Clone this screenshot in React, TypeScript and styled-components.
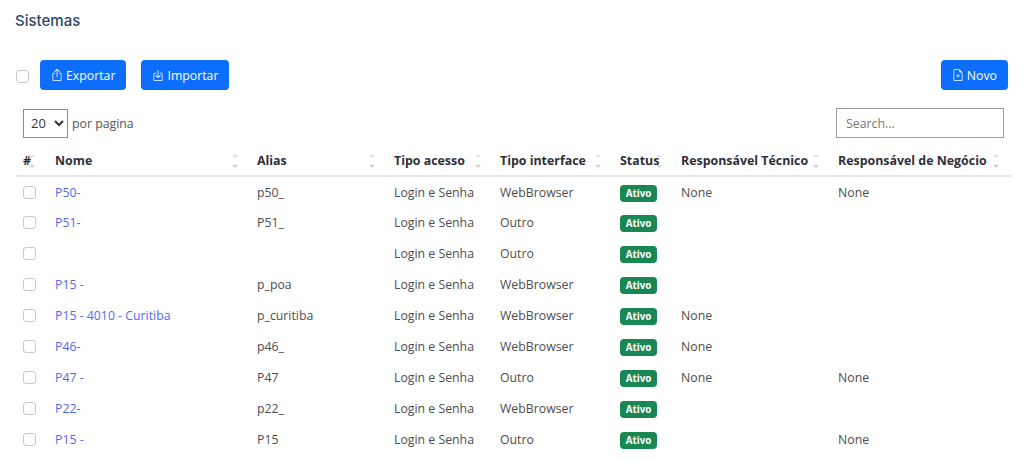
import React from 'react';
import styled, { createGlobalStyle } from 'styled-components';
import { BsBoxArrowUp, BsBoxArrowInDown, BsFileEarmarkPlus } from 'react-icons/bs';

const GlobalStyle = createGlobalStyle`
  html, body {
    margin: 0;
    background: #fff;
    font-family: "Open Sans", "Liberation Sans", sans-serif;
    color: #444;
  }
`;

const columns = [
  { title: '#', width: 32, right: 13 },
  { title: 'Nome', width: 202, right: 12 },
  { title: 'Alias', width: 137, right: 12 },
  { title: 'Tipo acesso', width: 106, right: 12 },
  { title: 'Tipo interface', width: 120, right: 12 },
  { title: 'Status', width: 61, right: 12 },
  { title: 'Responsável Técnico', width: 157, right: 12 },
  { title: 'Responsável de Negócio', width: 180, right: 12 },
];

const rows = [
  { nome: 'P50-', alias: 'p50_', acesso: 'Login e Senha', iface: 'WebBrowser', tecnico: 'None', negocio: 'None' },
  { nome: 'P51-', alias: 'P51_', acesso: 'Login e Senha', iface: 'Outro', tecnico: '', negocio: '' },
  { nome: '', alias: '', acesso: 'Login e Senha', iface: 'Outro', tecnico: '', negocio: '' },
  { nome: 'P15 -', alias: 'p_poa', acesso: 'Login e Senha', iface: 'WebBrowser', tecnico: '', negocio: '' },
  { nome: 'P15 - 4010 - Curitiba', alias: 'p_curitiba', acesso: 'Login e Senha', iface: 'WebBrowser', tecnico: 'None', negocio: '' },
  { nome: 'P46-', alias: 'p46_', acesso: 'Login e Senha', iface: 'WebBrowser', tecnico: 'None', negocio: '' },
  { nome: 'P47 -', alias: 'P47', acesso: 'Login e Senha', iface: 'Outro', tecnico: 'None', negocio: 'None' },
  { nome: 'P22-', alias: 'p22_', acesso: 'Login e Senha', iface: 'WebBrowser', tecnico: '', negocio: '' },
  { nome: 'P15 -', alias: 'P15', acesso: 'Login e Senha', iface: 'Outro', tecnico: '', negocio: 'None' },
];

const Page = styled.div`
  width: 1024px;
  height: 460px;
  overflow: hidden;
  padding: 12px 13px 0 16px;
  box-sizing: border-box;
`;

const Title = styled.h1`
  margin: 0 0 30px -1px;
  font-family: Inter, "Open Sans", sans-serif;
  font-size: 15px;
  line-height: 18px;
  font-weight: 500;
  color: #2b4668;
`;

const Toolbar = styled.div`
  display: flex;
  align-items: center;
  height: 30px;
`;

const Check = styled.span`
  display: block;
  width: 13px;
  height: 13px;
  box-sizing: border-box;
  border: 1px solid #c6c8cc;
  border-radius: 3px;
  background: #fff;
`;

const HeadCheck = styled(Check)`
  margin: 2px 11px 0 0;
`;

const Button = styled.button<{ $gap?: number; $push?: boolean }>`
  display: flex;
  align-items: center;
  justify-content: center;
  gap: 3px;
  height: 30px;
  padding: 0 11px;
  margin-left: ${(p) => (p.$push ? 'auto' : '0')};
  margin-right: ${(p) => p.$gap ?? 0}px;
  border: 0;
  border-radius: 4px;
  background: #0d6efd;
  color: #fff;
  font-family: "Open Sans", sans-serif;
  font-size: 12.3px;
`;

const Controls = styled.div`
  display: flex;
  align-items: center;
  justify-content: space-between;
  margin: 18px 7px 0 7px;
  height: 30px;
`;

const PerPage = styled.label`
  display: flex;
  align-items: center;
  gap: 4px;
  font-size: 12.3px;
  color: #555;
`;

const Select = styled.select`
  width: 45px;
  height: 29px;
  padding-left: 3px;
  border: 1px solid #8c8c8c;
  border-radius: 0;
  background: #fff;
  font-family: "Open Sans", sans-serif;
  font-size: 13px;
  color: #333;
`;

const SearchBox = styled.input`
  width: 168px;
  height: 30px;
  box-sizing: border-box;
  padding: 0 9px;
  border: 1px solid #9a9a9a;
  font-family: "Open Sans", sans-serif;
  font-size: 12.3px;
  outline: none;
  &::placeholder {
    color: #777;
  }
`;

const Table = styled.table`
  width: 995px;
  margin-top: 7px;
  table-layout: fixed;
  border-collapse: collapse;
`;

const HeadCell = styled.th`
  position: relative;
  height: 31px;
  padding: 0 0 0 7px;
  box-sizing: border-box;
  border-bottom: 2px solid #e6e6e6;
  text-align: left;
  font-size: 12.4px;
  font-weight: 700;
  color: #2f2f3a;
  white-space: nowrap;
`;

const Sort = styled.span<{ $right: number }>`
  position: absolute;
  top: 9px;
  right: ${(p) => p.$right}px;
  display: flex;
  flex-direction: column;
  gap: 8px;
  &::before,
  &::after {
    content: '';
    border-left: 3px solid transparent;
    border-right: 3px solid transparent;
  }
  &::before {
    border-bottom: 3px solid #e2e2e2;
  }
  &::after {
    border-top: 3px solid #cfcfcf;
  }
`;

const Cell = styled.td`
  height: 30.9px;
  padding: 1px 0 0 7px;
  box-sizing: border-box;
  font-size: 12.3px;
  color: #4d4d4d;
  white-space: nowrap;
`;

const NameLink = styled.a`
  color: #5468ee;
  text-decoration: none;
`;

const Badge = styled.span`
  display: inline-block;
  width: 37px;
  height: 17px;
  margin-top: 2px;
  border-radius: 4px;
  background: #198754;
  color: #fff;
  font-size: 9.8px;
  font-weight: 700;
  line-height: 17px;
  text-align: center;
  vertical-align: middle;
`;

export default function App() {
  return (
    <Page>
      <GlobalStyle />
      <Title>Sistemas</Title>
      <Toolbar>
        <HeadCheck />
        <Button $gap={15}><BsBoxArrowUp size={12} />Exportar</Button>
        <Button><BsBoxArrowInDown size={12} />Importar</Button>
        <Button $push $gap={3}><BsFileEarmarkPlus size={12} />Novo</Button>
      </Toolbar>
      <Controls>
        <PerPage>
          <Select defaultValue="20">
            <option>10</option>
            <option>20</option>
            <option>50</option>
          </Select>
          por pagina
        </PerPage>
        <SearchBox placeholder="Search..." />
      </Controls>
      <Table>
        <colgroup>
          {columns.map((c) => <col key={c.title} width={c.width} />)}
        </colgroup>
        <thead>
          <tr>
            {columns.map((c) => (
              <HeadCell key={c.title}>
                {c.title}
                <Sort $right={c.right} />
              </HeadCell>
            ))}
          </tr>
        </thead>
        <tbody>
          {rows.map((r, i) => (
            <tr key={i}>
              <Cell><Check /></Cell>
              <Cell><NameLink href="#">{r.nome}</NameLink></Cell>
              <Cell>{r.alias}</Cell>
              <Cell>{r.acesso}</Cell>
              <Cell>{r.iface}</Cell>
              <Cell><Badge>Ativo</Badge></Cell>
              <Cell>{r.tecnico}</Cell>
              <Cell>{r.negocio}</Cell>
            </tr>
          ))}
        </tbody>
      </Table>
    </Page>
  );
}
